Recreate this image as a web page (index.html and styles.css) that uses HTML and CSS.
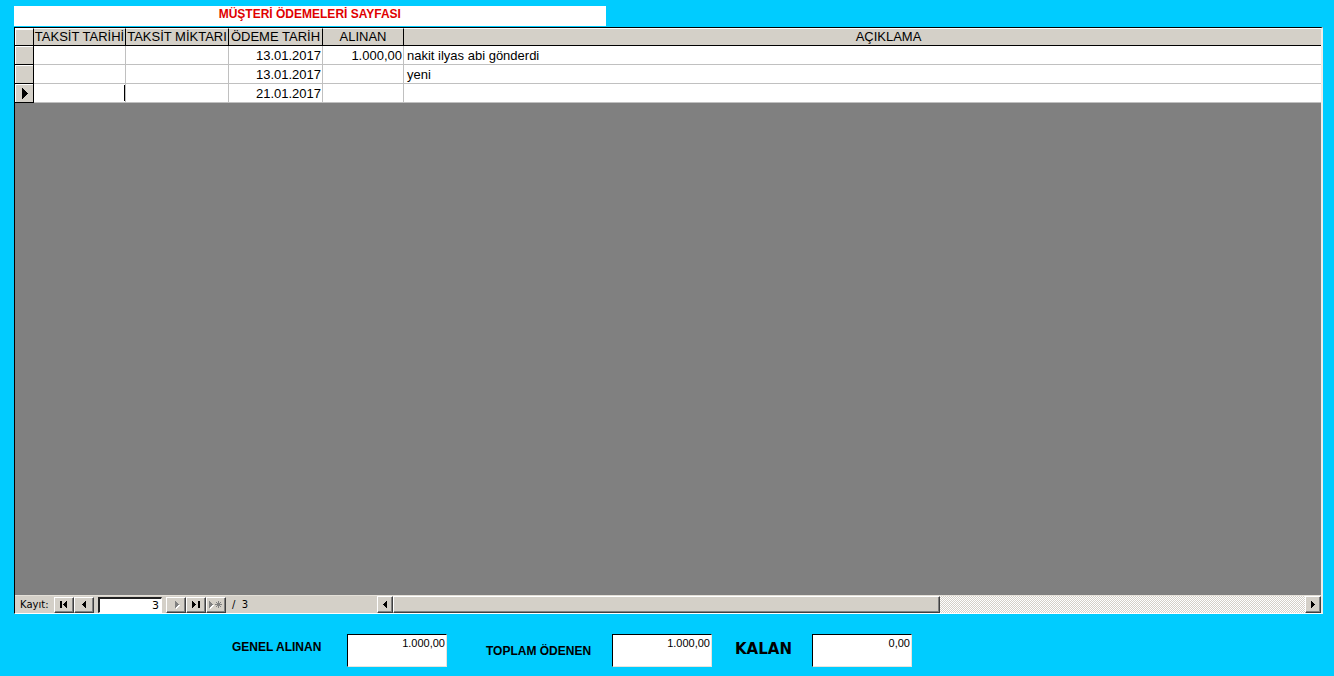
FILE: index.html
```html
<!DOCTYPE html>
<html lang="tr">
<head>
<meta charset="utf-8">
<title>Müşteri Ödemeleri</title>
<link rel="stylesheet" href="styles.css">
</head>
<body>
<main class="form">
  <h1 class="title">MÜŞTERİ ÖDEMELERİ SAYFASI</h1>
  <section class="sheet">
    <div class="sheet-body">
      <table class="grid">
        <colgroup>
          <col class="c-sel"><col class="c-due"><col class="c-amount"><col class="c-paid"><col class="c-received"><col>
        </colgroup>
        <thead>
          <tr><th class="sel"></th><th>TAKSİT TARİHİ</th><th>TAKSİT MİKTARI</th><th>ÖDEME TARİH</th><th>ALINAN</th><th class="note-head">AÇIKLAMA</th></tr>
        </thead>
        <tbody>
          <tr><td class="sel"></td><td></td><td></td><td class="num">13.01.2017</td><td class="num">1.000,00</td><td>nakit ilyas abi gönderdi</td></tr>
          <tr><td class="sel"></td><td></td><td></td><td class="num">13.01.2017</td><td></td><td>yeni</td></tr>
          <tr><td class="sel"><svg class="pointer" width="18" height="18" viewBox="0 0 18 18" shape-rendering="crispEdges"><path d="M7 4h1v1h1v1h1v1h1v1h1v1h1v1h-1v1h-1v1h-1v1h-1v1h-1v1h-1z"/></svg></td><td class="active"></td><td></td><td class="num">21.01.2017</td><td></td><td></td></tr>
        </tbody>
      </table>
    </div>
    <div class="status">
      <div class="nav">
        <label class="nav-label" for="record">Kayıt:</label>
        <button class="btn" aria-label="İlk kayıt"><svg width="16" height="11" viewBox="0 0 16 11" shape-rendering="crispEdges"><path d="M4 2h2v7h-2zM11 2v7h-1v-1h-1v-1h-1v-1h-1v-1h1v-1h1v-1h1v-1z"/></svg></button>
        <button class="btn" aria-label="Önceki kayıt"><svg width="16" height="11" viewBox="0 0 16 11" shape-rendering="crispEdges"><path d="M10 2v7h-1v-1h-1v-1h-1v-1h-1v-1h1v-1h1v-1h1v-1z"/></svg></button>
        <input class="record" id="record" type="text" value="3">
        <button class="btn off" disabled aria-label="Sonraki kayıt"><svg width="16" height="11" viewBox="0 0 16 11" shape-rendering="crispEdges"><path class="hi" d="M8 3v7h1v-1h1v-1h1v-1h1v-1h-1v-1h-1v-1h-1v-1z"/><path d="M7 2v7h1v-1h1v-1h1v-1h1v-1h-1v-1h-1v-1h-1v-1z"/></svg></button>
        <button class="btn" aria-label="Son kayıt"><svg width="16" height="11" viewBox="0 0 16 11" shape-rendering="crispEdges"><path d="M4 2v7h1v-1h1v-1h1v-1h1v-1h-1v-1h-1v-1h-1v-1zM10 2h2v7h-2z"/></svg></button>
        <button class="btn off" disabled aria-label="Yeni kayıt"><svg width="16" height="11" viewBox="0 0 16 11" shape-rendering="crispEdges"><path class="hi" d="M2 3v7h1v-1h1v-1h1v-1h1v-1h-1v-1h-1v-1h-1v-1z"/><path d="M1 2v7h1v-1h1v-1h1v-1h1v-1h-1v-1h-1v-1h-1v-1zM10 2h1v7h-1zM7 5h7v1h-7zM8 3h1v1h1v1h-1v-1h-1zM12 3h1v1h-1v1h-1v-1h1zM9 6h1v1h-1v1h-1v-1h1zM11 6h1v1h1v1h-1v-1h-1z"/></svg></button>
        <span class="count">/&nbsp; 3</span>
      </div>
      <div class="scroll">
        <button class="arrow" aria-label="Sola kaydır"><svg width="12" height="12" viewBox="0 0 12 12" shape-rendering="crispEdges"><path d="M8 2v7h-1v-1h-1v-1h-1v-1h-1v-1h1v-1h1v-1h1v-1z"/></svg></button>
        <div class="track"><div class="thumb"></div></div>
        <button class="arrow" aria-label="Sağa kaydır"><svg width="12" height="12" viewBox="0 0 12 12" shape-rendering="crispEdges"><path d="M4 2v7h1v-1h1v-1h1v-1h1v-1h-1v-1h-1v-1h-1v-1z"/></svg></button>
      </div>
    </div>
  </section>
  <footer class="totals">
    <label class="total-label first" for="total">GENEL ALINAN</label>
    <input class="total" id="total" type="text" value="1.000,00">
    <label class="total-label second" for="paid">TOPLAM ÖDENEN</label>
    <input class="total" id="paid" type="text" value="1.000,00">
    <label class="total-label big" for="rest">KALAN</label>
    <input class="total" id="rest" type="text" value="0,00">
  </footer>
</main>
</body>
</html>
```
FILE: styles.css
```css
* { box-sizing: border-box; }
body {
  margin: 0;
  background: #00ccff;
  color: #000;
  font-family: "Liberation Sans", Arial, sans-serif;
}
.form {
  display: flex;
  flex-direction: column;
  min-height: 100vh;
  padding: 6px 11px 9px 14px;
}
.title {
  width: 45.2%;
  height: 20px;
  margin: 0 0 1px;
  background: #fff;
  color: #e00000;
  font-size: 12px;
  line-height: 16px;
  font-weight: bold;
  text-align: center;
}
.sheet {
  flex: 1;
  display: flex;
  flex-direction: column;
  border: 1px solid #000;
  border-right: 2px solid #f0eee8;
  border-bottom-color: #fff;
  background: #808080;
}
.sheet-body { flex: 1; }
.grid {
  width: 100%;
  table-layout: fixed;
  border-collapse: separate;
  border-spacing: 0;
  font-size: 13px;
  line-height: 16px;
}
.c-sel { width: 19px; }
.c-due { width: 92px; }
.c-amount { width: 103px; }
.c-paid { width: 94px; }
.c-received { width: 81px; }
.grid th, .grid td {
  overflow: hidden;
  white-space: nowrap;
}
.grid th {
  height: 18px;
  padding: 0;
  background: #d4d0c8;
  border-top: 1px solid #fff;
  border-right: 1px solid #000;
  border-bottom: 1px solid #000;
  font-weight: normal;
}
.grid .note-head {
  padding-left: 52px;
  border-right: 0;
}
.grid td {
  height: 19px;
  padding: 2px 2px 0 3px;
  background: #fff;
  border-right: 1px solid #c0c0c0;
  border-bottom: 1px solid #c0c0c0;
}
.grid td:last-child { border-right: 0; }
.grid .num { padding: 2px 1px 0; text-align: right; }
.grid .sel {
  padding: 0;
  background: #d4d0c8;
  border-right: 1px solid #000;
  border-bottom: 1px solid #000;
  box-shadow: inset 1px 1px #fff;
}
.pointer { display: block; }
.grid .active { position: relative; }
.active::after {
  content: "";
  position: absolute;
  top: 1px;
  right: 0;
  width: 1px;
  height: 16px;
  background: #000;
}
.status {
  display: flex;
  height: 18px;
  background: #d4d0c8;
  border-top: 1px solid #e4e0d8;
}
.nav {
  display: flex;
  align-items: center;
  width: 362px;
  padding-left: 5px;
  font-family: "DejaVu Sans", sans-serif;
  font-size: 10px;
}
.nav-label { width: 34px; }
.btn, .arrow {
  display: flex;
  align-items: center;
  justify-content: center;
  padding: 0;
  background: #d4d0c8;
  border: 1px solid #fff;
  border-right-color: #404040;
  border-bottom-color: #404040;
  box-shadow: inset -1px -1px #808080;
}
.btn { width: 20px; height: 16px; }
.btn svg, .arrow svg { display: block; flex: none; }
.off svg { fill: #808080; }
.off .hi { fill: #fff; }
.record {
  width: 64px;
  height: 16px;
  margin: 0 4px;
  padding: 0 2px;
  border: 1px solid #fff;
  border-top: 2px solid #202020;
  border-left: 2px solid #202020;
  background: #fff;
  font: 11px "DejaVu Sans", sans-serif;
  text-align: right;
}
.count { padding-left: 6px; font-size: 10px; }
.scroll { flex: 1; display: flex; }
.arrow { width: 16px; height: 17px; }
.track {
  flex: 1;
  background: repeating-conic-gradient(#fff 0 25%, #d4d0c8 0 50%) 0 0 / 2px 2px;
}
.thumb {
  width: 60%;
  height: 17px;
  background: #d4d0c8;
  border: 1px solid #fff;
  border-right: 1px solid #404040;
  border-bottom: 1px solid #404040;
  box-shadow: inset -1px -1px #808080;
}
.totals {
  display: flex;
  align-items: flex-start;
  padding: 20px 0 0 218px;
}
.total-label { font-weight: bold; font-size: 12px; line-height: 16px; }
.first { width: 115px; padding-top: 5px; }
.second { width: 165px; padding: 9px 0 0 39px; }
.big {
  width: 100px;
  padding: 7px 0 0 23px;
  font-family: "DejaVu Sans", Verdana, sans-serif;
  font-size: 15px;
}
.total {
  width: 100px;
  height: 33px;
  padding: 1px 1px 16px;
  background: #fff;
  border: 1px solid #e8e4dc;
  border-top-color: #000;
  border-left-color: #000;
  font: 11px "Liberation Sans", Arial, sans-serif;
  text-align: right;
}
```
